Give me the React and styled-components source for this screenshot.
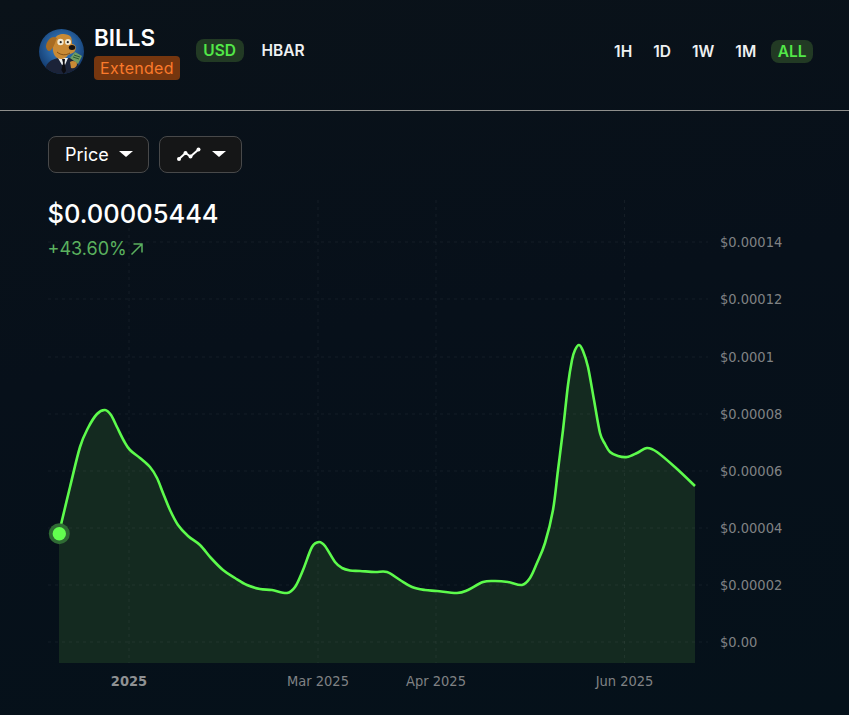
import React from "react";
import styled, { createGlobalStyle } from "styled-components";

const GlobalStyle = createGlobalStyle`
  html, body {
    margin: 0;
    padding: 0;
    background: #060e16;
  }
  body {
    font-family: Inter, "Liberation Sans", sans-serif;
  }
`;

const Page = styled.div`
  width: 849px;
  height: 715px;
  overflow: hidden;
  background: linear-gradient(170deg, #0a1219 0%, #07101a 45%, #05111a 100%);
  color: #fff;
`;

const Header = styled.header`
  height: 111px;
  box-sizing: border-box;
  border-bottom: 1px solid #8f8f8c;
  padding: 25px 36px 0 39px;
  display: flex;
  justify-content: space-between;
  align-items: flex-start;
`;

const TokenGroup = styled.div`
  display: flex;
  align-items: flex-start;
`;

const Avatar = styled.svg`
  width: 45px;
  height: 45px;
  margin-top: 4px;
  margin-right: 10px;
  flex: none;
`;

const TokenInfo = styled.div`
  display: flex;
  flex-direction: column;
  align-items: flex-start;
  margin-right: 16px;
`;

const TokenName = styled.div`
  font-size: 22.5px;
  line-height: 26px;
  font-weight: 600;
`;

const ExtendedBadge = styled.span`
  margin-top: 5px;
  height: 24px;
  line-height: 24px;
  padding: 0 6px;
  border-radius: 4px;
  background: #75360f;
  color: #fb7a2b;
  font-size: 16px;
  letter-spacing: 0.3px;
`;

const Switches = styled.div`
  display: flex;
  align-items: center;
  gap: ${(p) => p.$gap}px;
  margin-top: ${(p) => p.$top}px;
`;

const Pill = styled.button`
  border: 0;
  font-family: inherit;
  font-size: 15.5px;
  font-weight: 600;
  height: 23px;
  padding: 0 ${(p) => p.$pad || 0}px;
  margin-left: ${(p) => p.$shift || 0}px;
  border-radius: 8px;
  background: ${(p) => (p.$active ? "#223a24" : "transparent")};
  color: ${(p) => (p.$active ? "#52e848" : "#eef0f1")};
`;

const Toolbar = styled.div`
  display: flex;
  gap: 10px;
  padding: 25px 0 0 48px;
`;

const Dropdown = styled.button`
  display: flex;
  align-items: center;
  gap: 10px;
  height: 37px;
  box-sizing: border-box;
  padding: 0 15px 1px 16px;
  background: #151617;
  border: 1px solid #48494a;
  border-radius: 8px;
  color: #fff;
  font-family: inherit;
  font-size: 18px;
`;

const Caret = styled.span`
  width: 0;
  height: 0;
  border-left: 7px solid transparent;
  border-right: 7px solid transparent;
  border-top: 6.5px solid #fff;
`;

const ChartArea = styled.section`
  position: relative;
`;

const Stats = styled.div`
  position: absolute;
  left: 47.5px;
  top: 24px;
`;

const PriceValue = styled.div`
  font-size: 25.5px;
  line-height: 34px;
  font-weight: 500;
`;

const Change = styled.div`
  display: flex;
  align-items: center;
  gap: 3px;
  margin-top: 5px;
  font-size: 18px;
  line-height: 26px;
  color: #5bb25f;
`;

const ChartSvg = styled.svg`
  display: block;
  width: 849px;
  height: 542px;
`;

const AxisText = styled.text`
  font-family: "DejaVu Sans", sans-serif;
  font-stretch: condensed;
  font-size: 14.5px;
  fill: ${(p) => (p.$strong ? "#8f9193" : "#808284")};
  font-weight: ${(p) => (p.$strong ? 700 : 400)};
`;

const points = [
  [59, 533], [70, 487], [80, 447], [88, 428], [97, 414], [105, 410],
  [111, 415], [117, 427], [124, 441], [130, 450], [140, 458], [150, 467],
  [157, 478], [163, 493], [170, 510], [178, 525], [188, 536], [200, 545],
  [211, 558], [223, 570], [235, 578], [247, 585], [260, 589], [272, 590],
  [287, 593], [295, 587], [303, 570], [312, 547], [319, 542], [325, 546],
  [335, 562], [342, 568], [350, 570.5], [360, 571],
  [375, 572], [387, 572], [400, 580], [412, 587], [425, 590], [437, 591],
  [457, 593], [468, 590], [483, 582], [495, 581], [508, 582],
  [522, 585], [530, 578], [537, 563], [545, 543], [553, 510], [558, 470],
  [563, 430], [568, 385], [572, 360], [575, 350], [579, 345], [583, 351],
  [588, 367], [594, 400], [600, 433], [605, 444], [610, 452], [618, 456],
  [627, 457], [637, 453], [647, 448], [657, 452], [676, 468], [695, 486],
];

// catmull-rom to bezier so the price line stays smooth
const linePath = points.reduce((d, p, i) => {
  if (i === 0) return `M${p[0]} ${p[1]}`;
  const p0 = points[i - 2] || points[i - 1];
  const p1 = points[i - 1];
  const p3 = points[i + 1] || p;
  const c1x = p1[0] + (p[0] - p0[0]) / 6;
  const c1y = p1[1] + (p[1] - p0[1]) / 6;
  const c2x = p[0] - (p3[0] - p1[0]) / 6;
  const c2y = p[1] - (p3[1] - p1[1]) / 6;
  return `${d} C${c1x} ${c1y} ${c2x} ${c2y} ${p[0]} ${p[1]}`;
}, "");
const areaPath = `${linePath} L695 663 L59 663 Z`;

const yTicks = [
  ["$0.00014", 242], ["$0.00012", 299], ["$0.0001", 357], ["$0.00008", 414],
  ["$0.00006", 471], ["$0.00004", 528], ["$0.00002", 585], ["$0.00", 642],
];
const xTicks = [
  ["2025", 129, true], ["Mar 2025", 318], ["Apr 2025", 436], ["Jun 2025", 624.5],
];

const DogAvatar = () => (
  <Avatar viewBox="0 0 45 45">
    <defs>
      <radialGradient id="sky" cx="0.5" cy="0.4" r="0.6">
        <stop offset="0" stopColor="#3f8ad0" />
        <stop offset="1" stopColor="#123a6e" />
      </radialGradient>
      <clipPath id="disc">
        <circle cx="22.5" cy="22.5" r="22.5" />
      </clipPath>
    </defs>
    <g clipPath="url(#disc)">
      <rect width="45" height="45" fill="url(#sky)" />
      <path d="M5 45 C6 34 12 30 20 29 L31 29 C38 31 41 37 42 45 Z" fill="#1b2338" />
      <path d="M19 29 L29 29 L26 36 L23 36 Z" fill="#eef0f0" />
      <path d="M23 30 L26 30 L25.6 34 L27 42 L24.6 45 L22.4 41 L24 34 Z" fill="#0c0c10" />
      <path d="M16 10 C17 5 27 3 32 8 C33 11 33 13 33 15 C36 15 38 18 36 22 C34 25 30 25 29 26 C26 31 19 31 16 27 C13 23 13 15 16 10 Z" fill="#c98a35" />
      <path d="M15 8 C11 8 7 13 7 18 C8 22 10 23 12 21 C15 18 16 13 18 9 Z" fill="#a86c22" />
      <circle cx="21.5" cy="13" r="3.2" fill="#f2ead2" />
      <circle cx="29" cy="13" r="3" fill="#f2ead2" />
      <circle cx="21.7" cy="13.2" r="1.1" fill="#222" />
      <circle cx="28.8" cy="13.2" r="1.1" fill="#222" />
      <ellipse cx="33" cy="18.5" rx="3.2" ry="2.5" fill="#16110e" />
      <path d="M18 23 C22 26.5 27 26.5 31 24" fill="none" stroke="#6e4212" strokeWidth="0.8" />
      <path d="M31 29 L36 23 L43 27 L39 35 Z" fill="#6f9c63" />
      <path d="M34 28 L40 30 M35 26 L41 28" stroke="#2e5a34" strokeWidth="1" />
      <path d="M31 33 C33 31 38 32 38 35 C38 38 35 40 32 39 Z" fill="#c98a35" />
    </g>
  </Avatar>
);

const LineIcon = () => (
  <svg width="26" height="16" viewBox="0 0 26 16" fill="none">
    <path d="M3 13 L9.5 7 L14.5 10.5 L22.5 3.5" stroke="#fff" strokeWidth="2" />
    <circle cx="3" cy="13" r="2" fill="#fff" />
    <circle cx="9.5" cy="7" r="2" fill="#fff" />
    <circle cx="14.5" cy="10.5" r="2" fill="#fff" />
    <circle cx="22.5" cy="3.5" r="2" fill="#fff" />
  </svg>
);

const ArrowUpRight = () => (
  <svg width="14" height="14" viewBox="0 0 14 14" fill="none">
    <path d="M1.5 12.5 L12 2 M3.5 2 H12 V10.5" stroke="#5bb25f" strokeWidth="1.5" />
  </svg>
);

const App = () => {
  return (
    <Page>
      <GlobalStyle />
      <Header>
        <TokenGroup>
          <DogAvatar />
          <TokenInfo>
            <TokenName>BILLS</TokenName>
            <ExtendedBadge>Extended</ExtendedBadge>
          </TokenInfo>
          <Switches $gap={18} $top={14}>
            <Pill $active $pad={7.5}>USD</Pill>
            <Pill>HBAR</Pill>
          </Switches>
        </TokenGroup>
        <Switches $gap={21} $top={15}>
          <Pill>1H</Pill>
          <Pill>1D</Pill>
          <Pill>1W</Pill>
          <Pill>1M</Pill>
          <Pill $active $pad={6.5} $shift={-6}>ALL</Pill>
        </Switches>
      </Header>
      <Toolbar>
        <Dropdown>
          Price
          <Caret />
        </Dropdown>
        <Dropdown>
          <LineIcon />
          <Caret />
        </Dropdown>
      </Toolbar>
      <ChartArea>
        <ChartSvg viewBox="0 173 849 542">
          <path d={areaPath} fill="#142a20" />
          <g stroke="#ffffff" strokeOpacity="0.055" strokeWidth="1" strokeDasharray="3 4">
            {yTicks.map(([label, y]) => (
              <line key={label} x1="48" x2="708" y1={y} y2={y} />
            ))}
            {xTicks.map(([label, x]) => (
              <line key={label} x1={x} x2={x} y1="200" y2="663" />
            ))}
          </g>
          <path d={linePath} fill="none" stroke="#5dfb4c" strokeWidth="2.6" strokeLinejoin="round" />
          <circle cx="59.3" cy="533.7" r="10.5" fill="#2f6b34" />
          <circle cx="59.3" cy="533.7" r="6.7" fill="#62ff4f" />
          {yTicks.map(([label, y]) => (
            <AxisText key={label} x="720" y={y + 5}>{label}</AxisText>
          ))}
          {xTicks.map(([label, x, strong]) => (
            <AxisText key={label} x={x} y="686" textAnchor="middle" $strong={strong}>{label}</AxisText>
          ))}
        </ChartSvg>
        <Stats>
          <PriceValue>$0.00005444</PriceValue>
          <Change>
            +43.60%
            <ArrowUpRight />
          </Change>
        </Stats>
      </ChartArea>
    </Page>
  );
};

export default App;
